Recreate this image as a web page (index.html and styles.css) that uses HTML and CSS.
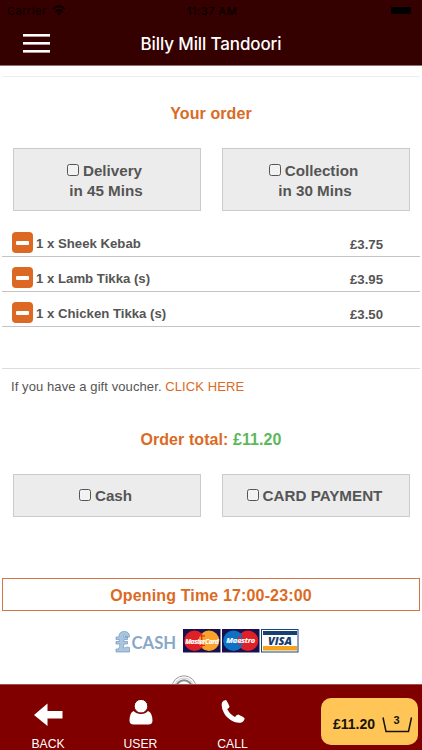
FILE: index.html
```html
<!DOCTYPE html>
<html lang="en">
<head>
<meta charset="utf-8">
<title>Billy Mill Tandoori</title>
<link rel="stylesheet" href="styles.css">
</head>
<body>
<div class="app">
  <header class="header">
    <div class="status">
      <span class="carrier">Carrier
        <svg width="14" height="11" viewBox="0 0 14 11" fill="none" stroke="#0b0000" stroke-width="2"><path d="M1 4Q7-1.500 13 4M3.500 6.800Q7 3.500 10.500 6.800"/><path d="M5 8.300Q7 6.700 9 8.300L7 10.500Z" fill="#0b0000" stroke="none"/></svg>
      </span>
      <span class="clock">11:37 AM</span>
      <span class="battery"><i></i></span>
    </div>
    <div class="navbar">
      <div class="burger"><i></i><i></i><i></i></div>
      <h1>Billy Mill Tandoori</h1>
    </div>
  </header>

  <main class="content">
    <h2 class="your-order">Your order</h2>
    <div class="options">
      <button class="option tall"><span><i class="check"></i>Delivery</span><span class="mins">in 45 Mins</span></button>
      <button class="option tall"><span><i class="check"></i>Collection</span><span class="mins">in 30 Mins</span></button>
    </div>
    <ul class="items">
      <li><i class="minus"></i><span>1 x Sheek Kebab</span><b>£3.75</b></li>
      <li><i class="minus"></i><span>1 x Lamb Tikka (s)</span><b>£3.95</b></li>
      <li><i class="minus"></i><span>1 x Chicken Tikka (s)</span><b>£3.50</b></li>
    </ul>
    <p class="voucher">If you have a gift voucher. <a>CLICK HERE</a></p>
    <h2 class="total">Order total: <span>£11.20</span></h2>
    <div class="options">
      <button class="option"><span><i class="check"></i>Cash</span></button>
      <button class="option"><span><i class="check"></i>CARD PAYMENT</span></button>
    </div>
    <div class="opening">Opening Time 17:00-23:00</div>
    <svg class="payments" width="184" height="26" viewBox="0 0 184 26">
      <g fill="#a9c5e1" stroke="#7396b9" stroke-width=".7">
        <path d="M1 21H3.500Q5 18.500 4.800 16H1V13.500H4.300V11.500H1V9H4Q3.500 3.500 9.500 3.500Q14.500 3.500 14.500 9H10.500Q10.500 6.800 9.300 7Q8.200 7.200 8.500 9H12.500V11.500H9V13.500H12.500V16H9Q9 18 8 19.500Q10 20.500 12 19L14.500 19.500V24H1Z"/>
      </g>
      <text class="cash-word" x="16.500" y="21">CASH</text>
      <rect x="68" y="1" width="37.500" height="23.500" fill="#18104f"/>
      <circle cx="79.500" cy="12.700" r="10.300" fill="#df2027"/>
      <circle cx="94" cy="12.700" r="10.300" fill="#faa32b"/>
      <path d="M86.700 5.500V20M84.700 8H90M84.700 17.500H90" stroke="#df2027" stroke-width="1.200"/>
      <text class="card-word" text-anchor="middle" x="86.700" y="15.500">MasterCard</text>
      <rect x="107" y="1" width="37.500" height="23.500" fill="#18104f"/>
      <circle cx="118.500" cy="12.700" r="10.300" fill="#0d72c5"/>
      <circle cx="133" cy="12.700" r="10.300" fill="#df2027"/>
      <path d="M125.700 5.500V20M123.700 8H128M123.700 17.500H128" stroke="#0d72c5" stroke-width="1.200"/>
      <text class="card-word maestro" text-anchor="middle" x="125.700" y="15.300">Maestro</text>
      <rect x="146.500" y="1.500" width="36.500" height="22.500" fill="#fff" stroke="#17487c"/>
      <path d="M148 3H182V7H148Z" fill="#163f72"/>
      <path d="M148 18H182V22.500H148Z" fill="#f5a21d"/>
      <text class="visa-word" text-anchor="middle" x="165" y="16.700">VISA</text>
    </svg>
    <svg class="emblem" width="26" height="9" viewBox="0 0 26 9" fill="none" stroke="#999"><circle cx="13" cy="13" r="12.200"/><circle cx="13" cy="13" r="10" stroke="#ccc"/><circle cx="13" cy="13" r="7.800" stroke="#888" stroke-width="2"/></svg>
  </main>

  <footer class="footer">
    <a class="tab"><svg width="30" height="26" viewBox="0 0 30 26"><path d="M1 15L14.500 3.500V11H29.500V18.500H14.500V26Z" fill="#fff"/></svg>BACK</a>
    <a class="tab"><svg width="24" height="26" viewBox="0 0 24 26" fill="#fff"><path d="M4.500 11Q7.500 14 12 14Q16.500 14 19 11Q23.500 13 23.500 20.500Q23.500 24.500 19.500 24.500H4.500Q.5 24.500 .5 20.500Q.5 13 4.500 11Z"/><circle cx="12" cy="6.200" r="6.800" stroke="#800000" stroke-width="1"/></svg>USER</a>
    <a class="tab"><svg width="24" height="26" viewBox="0 0 24 26"><path d="M1 2.500Q2 .3 5 0Q6.500 1.500 8.500 6.500Q8.500 8 6.200 9Q9 14.500 14 17Q15.500 14.500 17.200 14.500Q22 16.500 23.700 18.500Q23 22 19.500 22.700C13 23.500 6 18.500 3 13Q-.2 7.500 1 2.500Z" fill="#fff"/></svg>CALL</a>
    <a class="basket"><span>£11.20</span><svg width="31" height="20" viewBox="0 0 31 20"><path d="M1 3.500L4 17.500H26.500L29.500 3.500" fill="none" stroke="#17120a" stroke-width="1.500"/><text x="11.500" y="10" class="count">3</text></svg></a>
  </footer>
</div>
</body>
</html>
```
FILE: styles.css
```css
* { box-sizing: border-box; }
body { margin: 0; background: #fff; font-family: "Liberation Sans", Arial, sans-serif; color: #555; }
h1, h2, p, ul { margin: 0; padding: 0; }
.app { width: 422px; height: 750px; display: flex; flex-direction: column; overflow: hidden; }

.header { height: 66px; flex: none; background: #340000; border-bottom: 1px solid #8f6f6f; }
.status { height: 22px; padding: 0 9px 1px 7px; display: grid; grid-template-columns: 1fr auto 1fr; align-items: center; font: 11px Inter, sans-serif; letter-spacing: .5px; color: #0b0000; }
.carrier { display: flex; align-items: center; gap: 5px; }
.clock { font-weight: 500; padding-left: 4px; }
.battery { justify-self: end; padding: 2px; }
.battery i { display: block; width: 20px; height: 7px; background: #000; border-radius: 1px; }
.navbar { height: 43px; display: grid; grid-template-columns: 60px 1fr 60px; align-items: center; }
.burger { padding-left: 23px; display: grid; gap: 5px; }
.burger i { width: 27px; height: 3px; background: #fff; border-bottom: 1px solid #b99; }
.navbar h1 { font: 500 17px/20px Inter, sans-serif; letter-spacing: -.12px; color: #fff; text-align: center; }

.content { flex: none; height: 618px; padding-top: 10px; display: flex; flex-direction: column; overflow: hidden; }
.your-order, .total { font-size: 16px; letter-spacing: .08px; line-height: 20px; color: #db6a24; text-align: center; }
.your-order { border-top: 1px solid #eee; padding-top: 27px; margin: 0 2px 24px; height: 48px; }
.options { display: grid; grid-template-columns: 188px 188px; gap: 21px; padding-left: 13px; }
.option { height: 43px; padding: 1px 3px 0 0; border: 1px solid #cbcbcb; background: #ececec; display: flex; flex-direction: column; align-items: center; justify-content: center; font: bold 15.200px/20px "Liberation Sans", Arial, sans-serif; color: #555; }
.option.tall { height: 63px; padding: 2px 5px 0 0; }
.option > span { display: flex; align-items: center; }
.check { width: 12px; height: 12px; margin: -2px 4px 0 0; border: 1px solid #555; border-radius: 2.500px; background: #f2f2f2; }
.mins { padding-left: 3px; }

.items { list-style: none; margin: 11px 2px 0; height: 147px; flex: none; border-bottom: 1px solid #ddd; }
.items li { height: 35px; padding: 7px 0 0 10px; display: flex; align-items: center; border-bottom: 1px solid #c4c4c4; font-weight: bold; font-size: 13.200px; }
.items span { padding: 2px 0 0 3px; }
.items b { margin: 3px 37px 0 auto; font-size: 13.200px; }
.minus { width: 21px; height: 21px; border-radius: 4px; background: #dc6823; display: grid; place-items: center; }
.minus::before { content: ""; width: 13px; height: 4px; border-radius: 1px; background: #fff; }

.voucher { padding: 9px 0 0 11px; height: 62px; font-size: 13px; letter-spacing: .09px; line-height: 18px; }
.voucher a { color: #db6a24; }
.total { height: 44px; }
.total span { color: #5cb85c; }
.opening { margin: 61px 2px 0; height: 33px; flex: none; border: 1px solid #d2764a; font-weight: bold; font-size: 16px; letter-spacing: .15px; line-height: 33px; text-align: center; color: #db6a24; }
.payments { flex: none; margin: 17px 0 0 115px; }
.cash-word { font: bold 16.700px Lato, sans-serif; fill: #89a8c8; }
.card-word { font: italic bold 6.600px "Open Sans", sans-serif; letter-spacing: -.35px; fill: #fff; stroke: #fff; stroke-width: .2; }
.card-word.maestro { font-size: 7.500px; letter-spacing: -.1px; }
.visa-word { font: italic 800 11px "Open Sans", sans-serif; fill: #173d70; }
.emblem { flex: none; margin: 21px 0 0 171px; }

.footer { flex: none; height: 66px; background: #800000; border-top: 1px solid #a64d4d; display: grid; grid-template-columns: 96px 89px 95px 41px 97px; }
.tab { padding-top: 15px; display: flex; flex-direction: column; align-items: center; gap: 11px; font-size: 12.200px; line-height: 14px; color: #fff; }
.basket { grid-column: 5; margin-top: 13px; height: 47px; padding: 4px 5px 0 12px; border-radius: 10px; background: #ffc657; color: #17120a; display: flex; align-items: center; justify-content: space-between; font-weight: bold; font-size: 14px; }
.count { font-size: 11px; font-weight: bold; fill: #17120a; }
```
